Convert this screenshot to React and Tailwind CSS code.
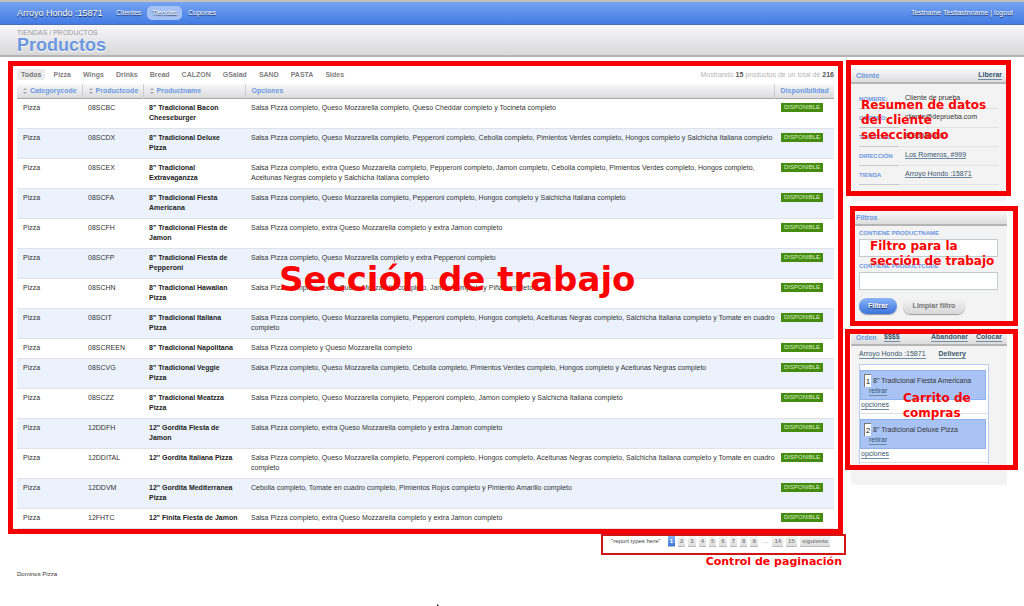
const SALSA = 'Salsa Pizza completo, ';
const rows = [
  ['08SCBC', '8" Tradicional Bacon\nCheeseburger', SALSA + 'Queso Mozzarella completo, Queso Cheddar completo y Tocineta completo'],
  ['08SCDX', '8" Tradicional Deluxe\nPizza', SALSA + 'Queso Mozzarella completo, Pepperoni completo, Cebolla completo, Pimientos Verdes completo, Hongos completo y Salchicha Italiana completo'],
  ['08SCEX', '8" Tradicional\nExtravaganzza', SALSA + 'extra Queso Mozzarella completo, Pepperoni completo, Jamon completo, Cebolla completo, Pimientos Verdes completo, Hongos completo, Aceitunas Negras completo y Salchicha Italiana completo'],
  ['08SCFA', '8" Tradicional Fiesta\nAmericana', SALSA + 'Queso Mozzarella completo, Pepperoni completo, Hongos completo y Salchicha Italiana completo'],
  ['08SCFH', '8" Tradicional Fiesta de\nJamon', SALSA + 'extra Queso Mozzarella completo y extra Jamon completo'],
  ['08SCFP', '8" Tradicional Fiesta de\nPepperoni', SALSA + 'Queso Mozzarella completo y extra Pepperoni completo'],
  ['08SCHN', '8" Tradicional Hawaiian\nPizza', SALSA + 'extra Queso Mozzarella completo, Jamon completo y Piña completo'],
  ['08SCIT', '8" Tradicional Italiana\nPizza', SALSA + 'Queso Mozzarella completo, Pepperoni completo, Hongos completo, Aceitunas Negras completo, Salchicha Italiana completo y Tomate en cuadro completo'],
  ['08SCREEN', '8" Tradicional Napolitana', 'Salsa Pizza completo y Queso Mozzarella completo'],
  ['08SCVG', '8" Tradicional Veggie\nPizza', SALSA + 'Queso Mozzarella completo, Cebolla completo, Pimientos Verdes completo, Hongos completo y Aceitunas Negras completo'],
  ['08SCZZ', '8" Tradicional Meatzza\nPizza', SALSA + 'Queso Mozzarella completo, Pepperoni completo, Jamon completo y Salchicha Italiana completo'],
  ['12DDFH', '12" Gordita Fiesta de\nJamon', SALSA + 'extra Queso Mozzarella completo y extra Jamon completo'],
  ['12DDITAL', '12" Gordita Italiana Pizza', SALSA + 'Queso Mozzarella completo, Pepperoni completo, Hongos completo, Aceitunas Negras completo, Salchicha Italiana completo y Tomate en cuadro completo'],
  ['12DDVM', '12" Gordita Mediterranea\nPizza', 'Cebolla completo, Tomate en cuadro completo, Pimientos Rojos completo y Pimiento Amarillo completo'],
  ['12FHTC', '12" Finita Fiesta de Jamon', SALSA + 'extra Queso Mozzarella completo y extra Jamon completo'],
];

const tabs = ['Todos', 'Pizza', 'Wings', 'Drinks', 'Bread', 'CALZON', 'GSalad', 'SAND', 'PASTA', 'Sides'];
const pages = ['1', '2', '3', '4', '5', '6', '7', '8', '9', '…', '14', '15', 'siguiente'];

const client = [
  ['NOMBRE:', 'Cliente de prueba', false],
  ['CORREO:', 'cliente@deprueba.com', false],
  ['TELÉFONO', '8095555555', false],
  ['DIRECCIÓN', 'Los Romeros, #999', true],
  ['TIENDA', 'Arroyo Hondo :15871', true],
];

const cart = [
  ['1', '8" Tradicional Fiesta Americana'],
  ['2', '8" Tradicional Deluxe Pizza'],
];

const link = 'border-b border-[#6f8ba3] text-[#36566e]';

function Frame({ className }) {
  return <div aria-hidden="true" className={`pointer-events-none absolute z-10 border-5 border-[#f40000] ${className}`} />;
}

function Note({ className, children }) {
  return (
    <p className={`pointer-events-none absolute z-20 font-['DejaVu_Sans',sans-serif] font-bold text-[#ff0000] ${className}`}>
      {children}
    </p>
  );
}

function PanelHeader({ children }) {
  return (
    <header className="flex h-[15px] items-center border-b-2 border-[#b5b5b5] bg-linear-to-b from-[#f8f8fb] to-[#dcdcdc] pr-[5px] pl-[5px] font-bold">
      {children}
    </header>
  );
}

function SortMark() {
  return (
    <svg viewBox="0 0 4 6" className="mr-[3px] inline-block h-[6px] w-[4px]" fill="#a5a5a5" aria-hidden="true">
      <path d="M2 0 4 2H0zM2 6 0 4h4z" />
    </svg>
  );
}

export default function App() {
  return (
    <div className="relative min-h-screen overflow-hidden bg-white font-['Liberation_Sans',Arial,sans-serif] text-[7px] leading-[10px] text-[#333]">
      <nav className="flex h-[25px] items-center border-t-2 border-b border-t-[#c3c3bd] border-b-[#4a6fb5] bg-linear-to-b from-[#76a3f2] to-[#427be3] pr-[11px] pl-[17px] text-white text-shadow-[0_1px_1px_#10244f]">
        <a href="#inicio" className="w-[90px] text-[9px]">Arroyo Hondo :15871</a>
        <div className="flex flex-1 items-center gap-[3px]">
          <a href="#clientes" className="pr-[3px] pl-[9px]">Clientes</a>
          <a href="#tiendas" className="rounded-[5px] bg-[#a5c1f5] px-[5px] py-[2px]">Tiendas</a>
          <a href="#cupones" className="px-[3px]">Cupones</a>
        </div>
        <p><a href="#perfil">Testname Testlastnname</a> | <a href="#logout">logout</a></p>
      </nav>
      <header className="h-[32px] border-b-2 border-[#b3b3b3] bg-linear-to-b from-[#f8f8fc] to-[#d8d8d8] px-[17px] pt-[4px]">
        <p className="leading-[8px] text-[#999]">TIENDAS / PRODUCTOS</p>
        <h1 className="text-[18px] leading-[17px] font-bold text-[#6b97e0] text-shadow-[0_1px_0_#fff]">Productos</h1>
      </header>

      <div className="flex gap-[17px] pt-[12px] pr-[17px] pl-[17px]">
        <main className="relative min-w-0 flex-1">
          <div className="flex items-start justify-between pb-[4px]">
            <div className="flex gap-[4px] font-bold text-[#808080]">
              {tabs.map((t, i) => (
                <a key={t} href={`#${t}`} className={i === 0 ? 'rounded-[2px] bg-[#ececec] px-[4px] pt-[1px] text-[#777]' : 'px-[4px] pt-[1px]'}>{t}</a>
              ))}
            </div>
            <p className="pt-[1px] text-[#b5b5b5]">
              Mostrando <b className="text-[#555]">15</b> productos de un total de <b className="text-[#555]">216</b>
            </p>
          </div>
          <table className="w-full table-fixed border-collapse text-left">
            <thead className="bg-linear-to-b from-[#f8f8fc] to-[#dcdcdc] text-[#6b97e0]">
              <tr className="h-[14px] border-b border-[#a5a5a5] [&>th]:p-0 [&>th]:pl-[6px] [&>th+th]:border-l [&>th+th]:border-[#cfcfcf]">
                <th className="w-[65px]"><SortMark />Categorycode</th>
                <th className="w-[61px]"><SortMark />Productcode</th>
                <th className="w-[102px]"><SortMark />Productname</th>
                <th>Opciones</th>
                <th className="w-[60px]">Disponibilidad</th>
              </tr>
            </thead>
            <tbody>
              {rows.map(([code, name, options]) => (
                <tr key={code} className="border-b border-[#dfe3e8] align-top even:bg-[#ebf2fc] [&>td]:pt-[4px] [&>td]:pb-[5px] [&>td]:pl-[6px]">
                  <td>Pizza</td>
                  <td>{code}</td>
                  <td className="font-bold whitespace-pre text-[#222]">{name}</td>
                  <td><div className="-mr-[6px]">{options}</div></td>
                  <td>
                    <span className="ml-px flex h-[9px] w-[42px] items-center justify-center bg-[#468c10] text-[6px] text-[#d8f0c0]">DISPONIBLE</span>
                  </td>
                </tr>
              ))}
            </tbody>
          </table>
          <Frame className="-top-[8px] -right-[9px] -bottom-[5px] -left-[9px]" />
          <Note className="top-[189px] left-[262px] text-[34px] leading-[42px] whitespace-nowrap">Sección de trabajo</Note>
        </main>

        <aside className="h-0 w-[156px]">
          <section className="relative mb-[10px] h-[132px] rounded-b-[3px] bg-[#f3f3f3]">
            <PanelHeader>
              <h2 className="flex-1 text-[#6b97e0]">Cliente</h2>
              <a href="#liberar" className={`leading-[8px] ${link}`}>Liberar</a>
            </PanelHeader>
            <dl className="pt-[6px] pr-[8px] pl-[8px]">
              {client.map(([k, v, isLink]) => (
                <div key={k} className="flex h-[19px]">
                  <dt className="w-[40px] border-b border-[#c8c8c8] pt-[4px] text-[6px] font-bold text-[#6b97e0]">{k}</dt>
                  <dd className="flex-1 border-b border-[#e2e2e2] pt-[3px] pl-[6px]">
                    {isLink ? <a href="#detalle" className={link}>{v}</a> : v}
                  </dd>
                </div>
              ))}
            </dl>
            <Frame className="-top-[9px] -right-[4px] bottom-[5px] -left-[5px]" />
            <Note className="top-[29px] left-[10px] text-[12px] leading-[15px] whitespace-nowrap">
              Resumen de datos<br />del cliente<br />seleccionado
            </Note>
          </section>

          <section className="relative mb-[10px] h-[110px] bg-[#f3f3f3]">
            <PanelHeader><h2 className="text-[#6b97e0]">Filtros</h2></PanelHeader>
            <form className="px-[8px] pt-[2px]" onSubmit={(e) => e.preventDefault()}>
              <label className="block pr-px text-[6px] font-bold text-[#6b97e0]">
                CONTIENE PRODUCTNAME
                <input type="text" className="mt-px mb-[4px] block h-[18px] w-full border border-[#c5cacf] bg-white" />
              </label>
              <label className="block pr-px text-[6px] font-bold text-[#6b97e0]">
                CONTIENE PRODUCTCODE
                <input type="text" className="mt-px block h-[18px] w-full border border-[#c5cacf] bg-white" />
              </label>
              <div className="mt-[8px] flex gap-[6px] font-bold">
                <button type="submit" className="h-[16px] w-[38px] rounded-full bg-linear-to-b from-[#8db4f7] to-[#3a74de] text-white shadow-[0_1px_1px_#999] text-shadow-[0_1px_1px_#10244f]">Filtrar</button>
                <button type="reset" className="h-[16px] w-[62px] rounded-full bg-linear-to-b from-[#f5f5f5] to-[#d8d8d8] text-[#777] shadow-[0_1px_1px_#999]">Limpiar filtro</button>
              </div>
            </form>
            <Frame className="-top-[5px] -right-[11px] -bottom-[5px] -left-[1px]" />
            <Note className="top-[28px] left-[19px] text-[12px] leading-[15px] whitespace-nowrap">
              Filtro para la<br />sección de trabajo
            </Note>
          </section>

          <section className="relative h-[154px] rounded-b-[3px] bg-[#f3f3f3]">
            <PanelHeader>
              <h2 className="w-[28px] text-[#6b97e0]">Orden</h2>
              <a href="#total" className={`mr-auto leading-[8px] ${link}`}>$$$$</a>
              <a href="#abandonar" className={`mr-[8px] leading-[8px] ${link}`}>Abandonar</a>
              <a href="#colocar" className={`leading-[8px] ${link}`}>Colocar</a>
            </PanelHeader>
            <div className="flex gap-[13px] px-[8px] pt-[3px]">
              <a href="#tienda" className={`leading-[9px] ${link}`}>Arroyo Hondo :15871</a>
              <a href="#delivery" className={`leading-[9px] font-bold ${link}`}>Delivery</a>
            </div>
            <ul className="mt-[5px] mr-[18px] ml-[8px] border border-b-0 border-[#b9cdee] bg-white pt-[5px] pb-px">
              {cart.map(([qty, name]) => (
                <li key={qty} className="border-b border-[#dedede] pb-[3px] not-last:mb-[5px]">
                  <div className="mr-[2px] h-[30px] border border-[#8fb0e8] bg-[#a9c3f5] pt-[3px] pl-[3px]">
                    <label className="flex items-center gap-[2px]">
                      <input type="text" defaultValue={qty} aria-label={`Cantidad de ${name}`} className="h-[13px] w-[7px] border-t border-l border-[#777] bg-white text-center text-[8px] text-[#222]" />
                      {name}
                    </label>
                    <a href="#retirar" className={`ml-[5px] block w-fit leading-[8px] ${link}`}>retirar</a>
                  </div>
                  <a href="#opciones" className={`mt-px ml-px block w-fit leading-[8px] ${link}`}>opciones</a>
                </li>
              ))}
            </ul>
            <Frame className="-top-[2px] -right-[11px] bottom-[15px] -left-[6px]" />
            <Note className="top-[60px] left-[52px] text-[12px] leading-[15px] whitespace-nowrap">
              Carrito de<br />compras
            </Note>
          </section>
        </aside>
      </div>

      <div className="mt-[5px] flex justify-end pr-[178px]">
        <div className="w-[245px] border-2 border-[#cf1515]">
          <nav className="flex h-[17px] items-start gap-[3px] pl-[8px] text-[6px] text-[#888]">
            <span className="mr-[4px] text-[#444]">"report types here"</span>
            {pages.map((p, i) => p === '…' ? (
              <span key={p} className="px-px">....</span>
            ) : (
              <a key={p} href={`#p${p}`} className={i === 0 ? 'bg-linear-to-b from-[#8db4f7] to-[#3a74de] px-[2px] font-bold text-white shadow-[0_1px_0_#bbb]' : 'bg-linear-to-b from-[#f5f5f5] to-[#dedede] px-[2px] font-bold shadow-[0_1px_0_#bbb]'}>{p}</a>
            ))}
          </nav>
        </div>
      </div>
      <p className="pr-[182px] text-right font-['DejaVu_Sans',sans-serif] text-[11px] leading-[14px] font-bold text-[#ff0000]">Control de paginación</p>
      <footer className="px-[17px] text-[6px]">Dominos Pizza</footer>
      <svg viewBox="0 0 2 2" className="absolute bottom-0 left-[437px] h-[2px] w-[2px]" aria-hidden="true">
        <path d="M0 0 2 2H0z" fill="#000" />
      </svg>
    </div>
  );
}
